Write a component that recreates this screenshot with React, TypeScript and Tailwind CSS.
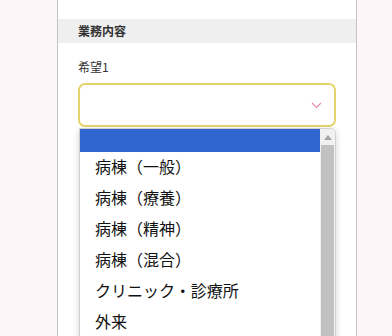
import React from "react";

const OPTIONS = [
  "",
  "病棟（一般）",
  "病棟（療養）",
  "病棟（精神）",
  "病棟（混合）",
  "クリニック・診療所",
  "外来",
];

export default function App() {
  return (
    <div
      className="relative h-[336px] w-[392px] overflow-hidden bg-[#fdf6f8]"
      style={{ fontFamily: '"Noto Sans CJK JP", "Noto Sans", sans-serif' }}
    >
      <div className="ml-[57px] h-full w-[300px] border-x border-[#c4c4c4] bg-white">
        <div className="h-[19px]" />
        <div className="flex h-[24px] items-center bg-[#efefef] px-[20px]">
          <span className="text-[12px] font-bold text-[#333]">業務内容</span>
        </div>
        <div className="px-[20px] pt-[15px]">
          <div className="text-[12px] leading-[18px] text-[#333]">希望1</div>
          <div className="mt-[7px] flex h-[44px] items-center justify-end rounded-[7px] border-2 border-[#e5d46c] bg-white pr-[12px]">
            <svg width="11" height="7" viewBox="0 0 11 7" fill="none">
              <path d="M1 1l4.5 4.5L10 1" stroke="#e58fa6" strokeWidth="1.2" />
            </svg>
          </div>
        </div>
      </div>

      <div className="absolute left-[79px] top-[128px] flex h-[220px] w-[257px] overflow-hidden rounded-tr-[5px] border border-[#d0d0d0] bg-white shadow-[0_2px_6px_rgba(0,0,0,0.18)]">
        <ul className="flex-1">
          {OPTIONS.map((o, i) =>
            i === 0 ? (
              <li key={i} className="h-[23px] bg-[#2f66d0]" />
            ) : (
              <li
                key={i}
                className="flex h-[31px] items-center pb-[3px] pl-[15px] text-[16px] text-[#111]"
              >
                {o}
              </li>
            )
          )}
        </ul>
        <div className="flex w-[15px] flex-col bg-[#f1f1f1] px-[1px]">
          <div className="flex h-[16px] items-center justify-center">
            <svg width="8" height="5" viewBox="0 0 8 5">
              <path d="M0 5L4 0L8 5Z" fill="#a3a3a3" />
            </svg>
          </div>
          <div className="flex-1 bg-[#c1c1c1]" />
        </div>
      </div>
    </div>
  );
}
